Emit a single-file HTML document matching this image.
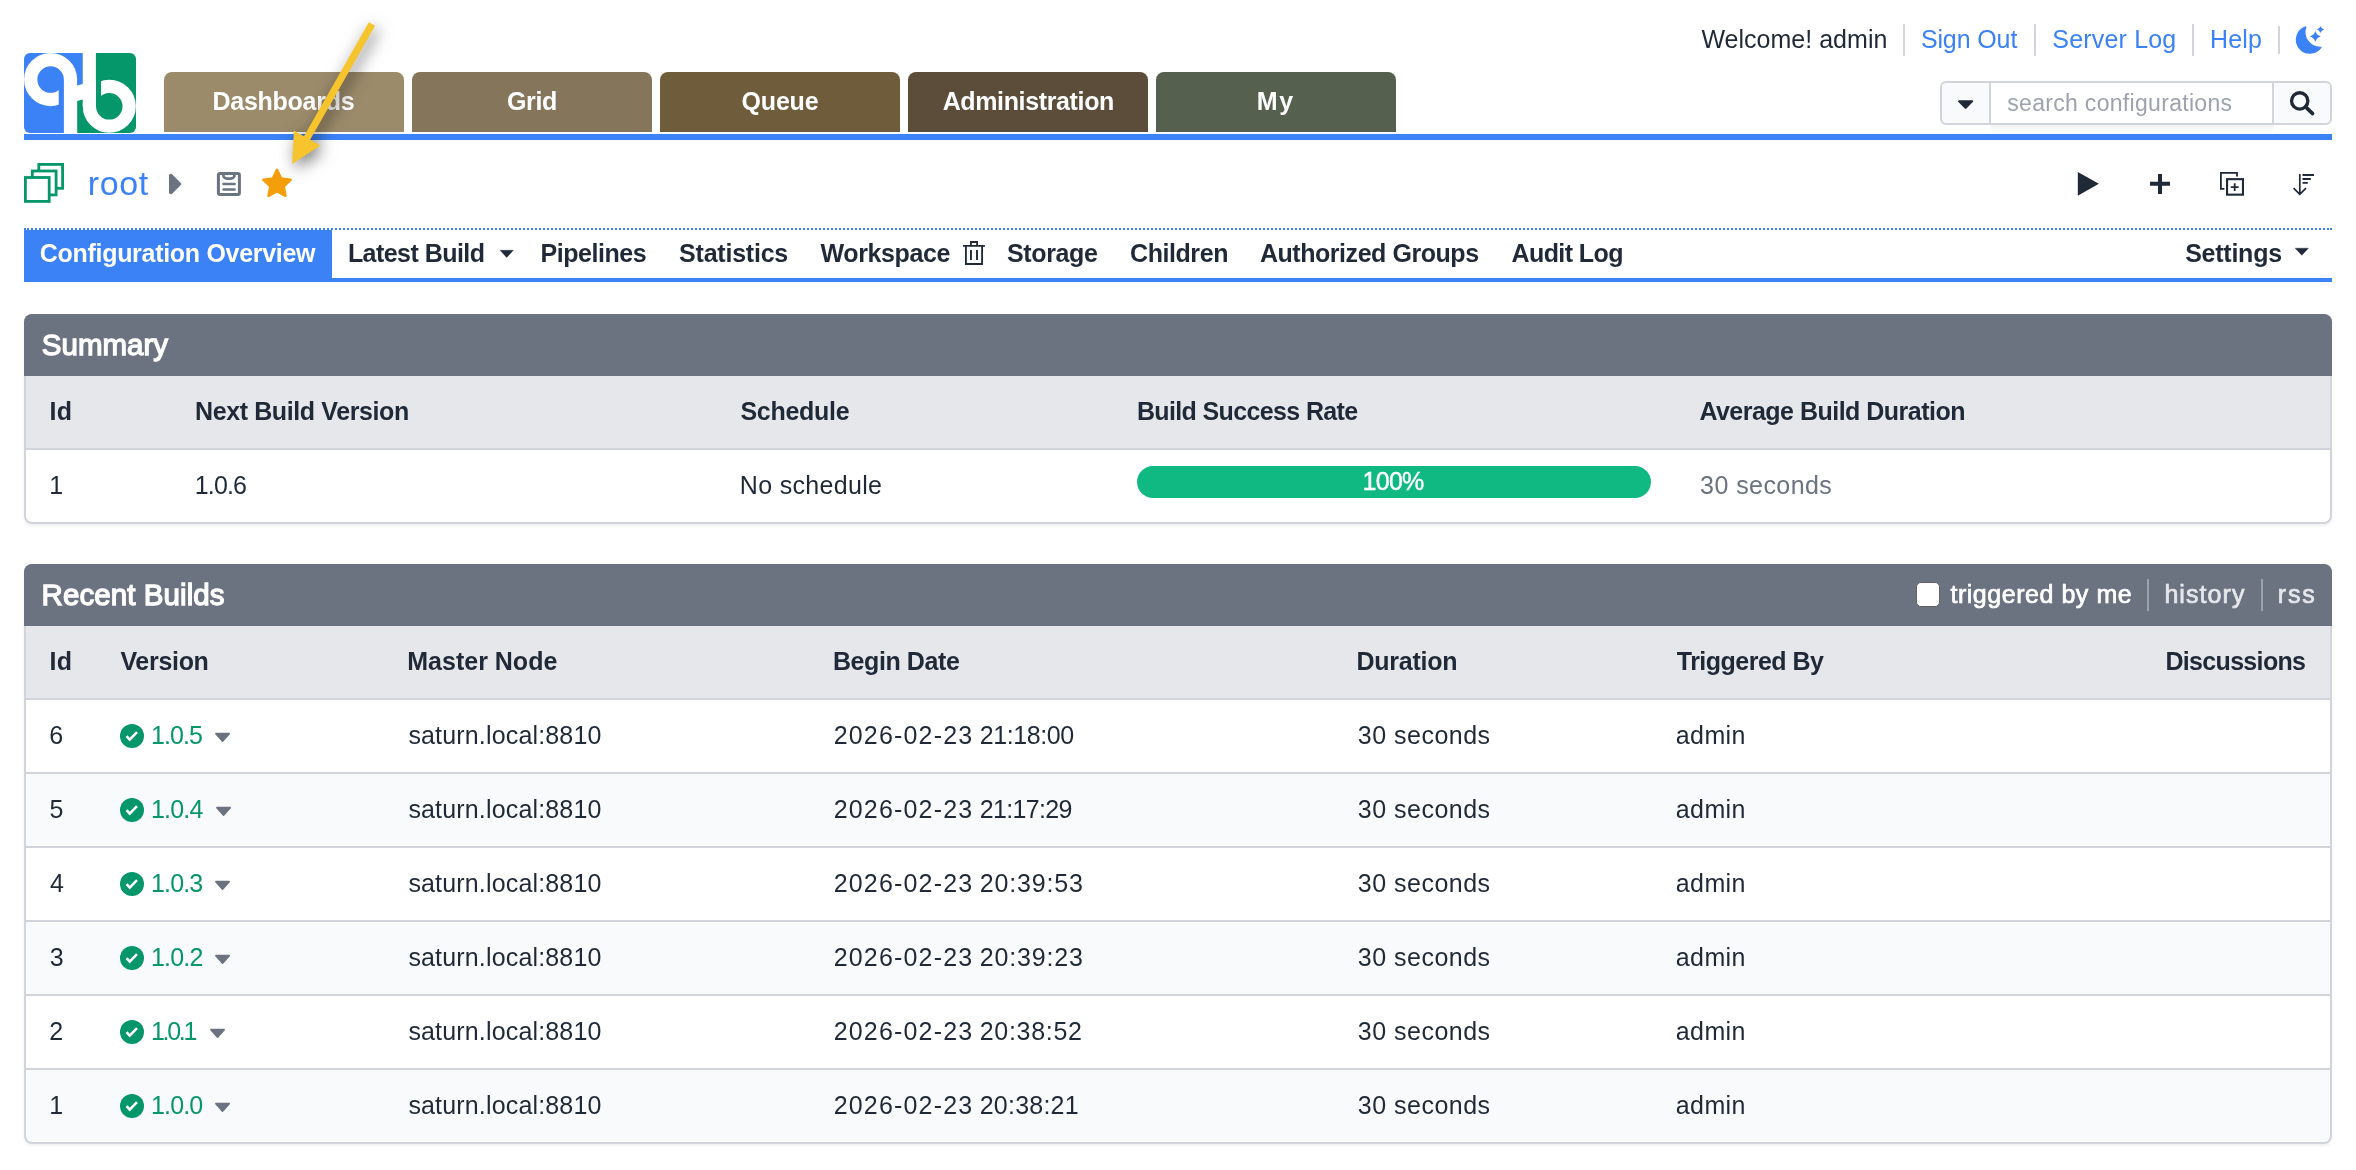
<!DOCTYPE html>
<html><head><meta charset="utf-8"><title>QuickBuild</title>
<style>
html,body{margin:0;padding:0;background:#fff}
body{width:2356px;height:1170px;position:relative;overflow:hidden;font-family:"Liberation Sans",sans-serif}
.t{position:absolute;white-space:pre;display:block}
.r{position:absolute;display:block}
#w{position:absolute;left:0;top:0;width:2356px;height:1170px;will-change:transform}
</style></head><body><div id="w">
<svg class="r" style="left:24px;top:53px" width="112" height="80" viewBox="24 53 112 80">
<defs><clipPath id="lc"><rect x="24" y="53" width="112" height="80" rx="6" ry="6"/></clipPath></defs>
<g clip-path="url(#lc)">
<rect x="77.1" y="53" width="60" height="80" fill="#059669"/>
<path d="M24 53H82.7V84L77.1 85.5V133H24Z" fill="#3b82f6"/>
<path d="M76.5 85.66L83.3 83.84V99.34L76.5 101.16Z" fill="#fff"/>
<circle cx="50.6" cy="79.6" r="19.9" fill="none" stroke="#fff" stroke-width="13.3"/>
<rect x="58.7" y="79.6" width="5.3" height="54" fill="#3b82f6"/>
<rect x="63.9" y="79.6" width="13.2" height="54" fill="#fff"/>
<circle cx="109.3" cy="106.3" r="19.9" fill="none" stroke="#fff" stroke-width="13.3"/>
<rect x="95.8" y="53" width="5.3" height="53.3" fill="#059669"/>
<rect x="82.7" y="53" width="13.2" height="53.3" fill="#fff"/>
</g></svg>
<div class="r" style="left:164px;top:72px;width:240px;height:60px;background:#9b8b6b;border-radius:8px 8px 0 0;"></div>
<span class="t" style="left:212.57px;top:89px;font-size:25px;line-height:25px;color:#fff;font-weight:700;letter-spacing:-0.278px;">Dashboards</span>
<div class="r" style="left:412px;top:72px;width:240px;height:60px;background:#85755a;border-radius:8px 8px 0 0;"></div>
<span class="t" style="left:507.00px;top:89px;font-size:25px;line-height:25px;color:#fff;font-weight:700;letter-spacing:-0.350px;">Grid</span>
<div class="r" style="left:660px;top:72px;width:240px;height:60px;background:#6e5c3b;border-radius:8px 8px 0 0;"></div>
<span class="t" style="left:741.60px;top:89px;font-size:25px;line-height:25px;color:#fff;font-weight:700;letter-spacing:-0.200px;">Queue</span>
<div class="r" style="left:908px;top:72px;width:240px;height:60px;background:#5b4d3a;border-radius:8px 8px 0 0;"></div>
<span class="t" style="left:942.67px;top:89px;font-size:25px;line-height:25px;color:#fff;font-weight:700;letter-spacing:-0.365px;">Administration</span>
<div class="r" style="left:1156px;top:72px;width:240px;height:60px;background:#55604e;border-radius:8px 8px 0 0;"></div>
<span class="t" style="left:1256.78px;top:89px;font-size:25px;line-height:25px;color:#fff;font-weight:700;letter-spacing:1.675px;">My</span>
<div class="r" style="left:24px;top:134px;width:2308px;height:6px;background:#3b82f6;"></div>
<span class="t" style="left:1701.40px;top:27px;font-size:25px;line-height:25px;color:#1f2937;letter-spacing:0.019px;">Welcome! admin</span>
<span class="t" style="left:1920.88px;top:27px;font-size:25px;line-height:25px;color:#3b82f6;letter-spacing:-0.118px;">Sign Out</span>
<span class="t" style="left:2052.28px;top:27px;font-size:25px;line-height:25px;color:#3b82f6;letter-spacing:0.186px;">Server Log</span>
<span class="t" style="left:2209.90px;top:27px;font-size:25px;line-height:25px;color:#3b82f6;letter-spacing:0.208px;">Help</span>
<div class="r" style="left:1903px;top:24px;width:2px;height:32px;background:#d1d5db;"></div>
<div class="r" style="left:2034px;top:24px;width:2px;height:32px;background:#d1d5db;"></div>
<div class="r" style="left:2192px;top:24px;width:2px;height:32px;background:#d1d5db;"></div>
<div class="r" style="left:2278px;top:26px;width:2px;height:28px;background:#d1d5db;"></div>
<svg class="r" style="left:2290px;top:20px" width="40" height="40" viewBox="2290 20 40 40">
<path d="M2305.7 27A13.4 13.4 0 1 0 2320.9 47.4 15.4 15.4 0 0 1 2305.7 27Z" fill="#3b82f6" stroke="#3b82f6" stroke-width="1.4" stroke-linejoin="round"/>
<path d="M2315.3 31.1Q2316.49 35.31 2320.7000000000003 36.5Q2316.49 37.69 2315.3 41.9Q2314.11 37.69 2309.9 36.5Q2314.11 35.31 2315.3 31.1Z" fill="#3b82f6"/>
<path d="M2320.5 25.9Q2321.29 28.71 2324.1 29.5Q2321.29 30.29 2320.5 33.1Q2319.71 30.29 2316.9 29.5Q2319.71 28.71 2320.5 25.9Z" fill="#3b82f6"/>
</svg>
<div class="r" style="left:1990px;top:124px;width:284px;height:7px;background:linear-gradient(rgba(0,0,0,.06),rgba(0,0,0,0))"></div>
<div class="r" style="left:1940px;top:81px;width:392px;height:44px;box-sizing:border-box;border:2px solid #d1d5db;border-radius:6px;background:#f9fafb;overflow:hidden"><div class="r" style="left:47px;top:0;width:285px;height:40px;background:#fff;border-left:2px solid #d1d5db;border-right:2px solid #d1d5db;box-sizing:border-box"></div></div>
<svg class="r" style="left:1957px;top:99px" width="18" height="11" viewBox="0 0 18 11"><path d="M2.2 1.2H15a1.1 1.1 0 0 1 .8 1.9L9.4 9.5a1.1 1.1 0 0 1-1.6 0L1.4 3.1a1.1 1.1 0 0 1 .8-1.9z" fill="#1f2937"/></svg>
<span class="t" style="left:2007.28px;top:92px;font-size:23px;line-height:23px;color:#9ca3af;letter-spacing:0.308px;">search configurations</span>
<svg class="r" style="left:2288px;top:90px" width="28" height="28" viewBox="0 0 28 28"><circle cx="11.7" cy="10.9" r="8.15" fill="none" stroke="#1f2937" stroke-width="3.3"/><path d="M17.6 16.9L24.6 23.6" stroke="#1f2937" stroke-width="3.6" stroke-linecap="round"/></svg>
<svg class="r" style="left:22px;top:161px" width="44" height="44" viewBox="22 161 44 44">
<g fill="#fff" stroke="#059669" stroke-width="2.8">
<rect x="38.8" y="164.4" width="23.8" height="23.9"/>
<rect x="32.3" y="171" width="23.8" height="23.9"/>
<rect x="25.4" y="177.5" width="23.8" height="23.9"/>
</g></svg>
<span class="t" style="left:87.85px;top:166px;font-size:34px;line-height:34px;color:#3b82f6;letter-spacing:0.625px;">root</span>
<svg class="r" style="left:166px;top:171px" width="18" height="26" viewBox="166 171 18 26"><path d="M170.8 175.6v16.8l8.5-8.4z" fill="#6b7280" stroke="#6b7280" stroke-width="3.6" stroke-linejoin="round"/></svg>
<svg class="r" style="left:215px;top:170px" width="28" height="28" viewBox="215 170 28 28">
<rect x="218.4" y="173.4" width="21" height="21.2" rx="1.8" fill="none" stroke="#6b7280" stroke-width="3"/>
<path d="M223.3 174v1a3.6 3.6 0 0 0 3.6 3.6h4a3.6 3.6 0 0 0 3.6-3.6v-1" fill="none" stroke="#6b7280" stroke-width="2.6"/>
<path d="M223.5 184.1h11.1M223.5 189.4h11.1" stroke="#6b7280" stroke-width="2.5" stroke-linecap="round"/>
</svg>
<svg class="r" style="left:258px;top:164px" width="38" height="38" viewBox="258 164 38 38"><path d="M277.00 169.90L281.11 178.54L290.60 179.78L283.66 186.36L285.41 195.77L277.00 191.20L268.59 195.77L270.34 186.36L263.40 179.78L272.89 178.54Z" fill="#f59e0b" stroke="#f59e0b" stroke-width="2.6" stroke-linejoin="round"/></svg>
<svg class="r" style="left:2076px;top:170px" width="26" height="28" viewBox="2076 170 26 28"><path d="M2077.8 171.9v23.8l21.1-11.9z" fill="#1f2937"/></svg>
<svg class="r" style="left:2148px;top:172px" width="24" height="24" viewBox="2148 172 24 24"><path d="M2160 174v20M2150 183.75h20" stroke="#1f2937" stroke-width="4"/></svg>
<svg class="r" style="left:2218px;top:170px" width="28" height="28" viewBox="2218 170 28 28">
<path d="M2224.4 188.8H2220.9V172.8H2237V176.4" fill="none" stroke="#1f2937" stroke-width="1.8"/>
<rect x="2227.05" y="179.15" width="15.9" height="15.5" fill="none" stroke="#1f2937" stroke-width="2.1"/>
<path d="M2234.7 183.2v7.8M2230.8 187.1h7.8" stroke="#1f2937" stroke-width="1.8"/>
</svg>
<svg class="r" style="left:2291px;top:171px" width="26" height="26" viewBox="2291 171 26 26">
<path d="M2299.8 174v20M2293.6 188.2l6.2 6.2 6.2-6.2" fill="none" stroke="#1f2937" stroke-width="1.7"/>
<path d="M2302.5 175h11.5M2302.5 179h8.3M2302.5 182.8h5.3" stroke="#1f2937" stroke-width="1.8"/>
</svg>
<div class="r" style="left:24px;top:228px;width:2308px;height:0;border-top:2px dotted #3b82f6"></div>
<div class="r" style="left:24px;top:230px;width:308px;height:52px;background:#3b82f6;"></div>
<div class="r" style="left:24px;top:278px;width:2308px;height:4px;background:#3b82f6;"></div>
<span class="t" style="left:39.80px;top:241px;font-size:25px;line-height:25px;color:#fff;font-weight:700;letter-spacing:-0.300px;">Configuration Overview</span>
<span class="t" style="left:347.88px;top:241px;font-size:25px;line-height:25px;color:#1f2937;font-weight:700;letter-spacing:-0.541px;">Latest Build</span>
<svg class="r" style="left:499px;top:249px" width="16" height="10" viewBox="499 249 16 10"><path d="M500.1 250.3H513.3L506.7 257.5z" fill="#1f2937" stroke="#1f2937" stroke-width=".4" stroke-linejoin="round"/></svg>
<span class="t" style="left:540.48px;top:241px;font-size:25px;line-height:25px;color:#1f2937;font-weight:700;letter-spacing:-0.444px;">Pipelines</span>
<span class="t" style="left:679.08px;top:241px;font-size:25px;line-height:25px;color:#1f2937;font-weight:700;letter-spacing:-0.225px;">Statistics</span>
<span class="t" style="left:820.60px;top:241px;font-size:25px;line-height:25px;color:#1f2937;font-weight:700;letter-spacing:-0.403px;">Workspace</span>
<svg class="r" style="left:961px;top:239px" width="26" height="28" viewBox="961 239 26 28">
<path d="M963 245.9h21.9M970.9 245.9V242H977.1V245.9" fill="none" stroke="#1f2937" stroke-width="1.85"/>
<path d="M965.9 246V264H982.1V246" fill="none" stroke="#1f2937" stroke-width="1.85"/>
<path d="M970.95 249.9v10M977 249.9v10" stroke="#1f2937" stroke-width="1.9"/>
</svg>
<span class="t" style="left:1006.98px;top:241px;font-size:25px;line-height:25px;color:#1f2937;font-weight:700;letter-spacing:-0.354px;">Storage</span>
<span class="t" style="left:1130.00px;top:241px;font-size:25px;line-height:25px;color:#1f2937;font-weight:700;letter-spacing:-0.425px;">Children</span>
<span class="t" style="left:1259.88px;top:241px;font-size:25px;line-height:25px;color:#1f2937;font-weight:700;letter-spacing:-0.448px;">Authorized Groups</span>
<span class="t" style="left:1511.47px;top:241px;font-size:25px;line-height:25px;color:#1f2937;font-weight:700;letter-spacing:-0.584px;">Audit Log</span>
<span class="t" style="left:2185.18px;top:241px;font-size:25px;line-height:25px;color:#1f2937;font-weight:700;letter-spacing:-0.246px;">Settings</span>
<svg class="r" style="left:2294px;top:247px" width="16" height="10" viewBox="2294 247 16 10"><path d="M2295.2 248.2H2308.4L2301.8 255.3z" fill="#1f2937" stroke="#1f2937" stroke-width=".4" stroke-linejoin="round"/></svg>
<div class="r" style="left:24px;top:314px;width:2308px;height:210px;border-radius:8px;background:#d1d5db;box-shadow:0 2px 3px rgba(0,0,0,.06)"></div>
<div class="r" style="left:24px;top:314px;width:2308px;height:62px;background:#6b7280;border-radius:8px 8px 0 0;"></div>
<div class="r" style="left:26px;top:376px;width:2304px;height:72px;background:#e5e7eb;"></div>
<span class="t" style="left:41.85px;top:330px;font-size:29.5px;line-height:29.5px;color:#fff;-webkit-text-stroke:1.3px #fff;">Summary</span>
<div class="r" style="left:26px;top:450px;width:2304px;height:72px;background:#fff;border-radius:0 0 6px 6px;"></div>
<span class="t" style="left:49.38px;top:399px;font-size:25px;line-height:25px;color:#1f2937;font-weight:700;letter-spacing:0.500px;">Id</span>
<span class="t" style="left:195.07px;top:399px;font-size:25px;line-height:25px;color:#1f2937;font-weight:700;letter-spacing:-0.397px;">Next Build Version</span>
<span class="t" style="left:740.38px;top:399px;font-size:25px;line-height:25px;color:#1f2937;font-weight:700;letter-spacing:-0.279px;">Schedule</span>
<span class="t" style="left:1136.88px;top:399px;font-size:25px;line-height:25px;color:#1f2937;font-weight:700;letter-spacing:-0.631px;">Build Success Rate</span>
<span class="t" style="left:1699.38px;top:399px;font-size:25px;line-height:25px;color:#1f2937;font-weight:700;letter-spacing:-0.517px;">Average Build Duration</span>
<span class="t" style="left:49.33px;top:473px;font-size:25px;line-height:25px;color:#1f2937;">1</span>
<span class="t" style="left:194.82px;top:473px;font-size:25px;line-height:25px;color:#1f2937;letter-spacing:-0.862px;">1.0.6</span>
<span class="t" style="left:739.80px;top:473px;font-size:25px;line-height:25px;color:#1f2937;letter-spacing:0.320px;">No schedule</span>
<div class="r" style="left:1137px;top:466px;width:514px;height:32px;background:#10b981;border-radius:16px;"></div>
<span class="t" style="left:1362.53px;top:469px;font-size:25px;line-height:25px;color:#fff;letter-spacing:-0.717px;-webkit-text-stroke:0.4px #fff;">100%</span>
<span class="t" style="left:1700.12px;top:473px;font-size:25px;line-height:25px;color:#6b7280;letter-spacing:0.431px;">30 seconds</span>
<div class="r" style="left:24px;top:564px;width:2308px;height:580px;border-radius:8px;background:#d1d5db;box-shadow:0 2px 3px rgba(0,0,0,.06)"></div>
<div class="r" style="left:24px;top:564px;width:2308px;height:62px;background:#6b7280;border-radius:8px 8px 0 0;"></div>
<div class="r" style="left:26px;top:626px;width:2304px;height:72px;background:#e5e7eb;"></div>
<span class="t" style="left:41.62px;top:580px;font-size:29.5px;line-height:29.5px;color:#fff;letter-spacing:0.073px;-webkit-text-stroke:1.3px #fff;">Recent Builds</span>
<span class="t" style="left:49.38px;top:649px;font-size:25px;line-height:25px;color:#1f2937;font-weight:700;letter-spacing:0.500px;">Id</span>
<span class="t" style="left:120.38px;top:649px;font-size:25px;line-height:25px;color:#1f2937;font-weight:700;letter-spacing:-0.304px;">Version</span>
<span class="t" style="left:407.27px;top:649px;font-size:25px;line-height:25px;color:#1f2937;font-weight:700;">Master Node</span>
<span class="t" style="left:832.88px;top:649px;font-size:25px;line-height:25px;color:#1f2937;font-weight:700;letter-spacing:-0.403px;">Begin Date</span>
<span class="t" style="left:1356.38px;top:649px;font-size:25px;line-height:25px;color:#1f2937;font-weight:700;letter-spacing:-0.218px;">Duration</span>
<span class="t" style="left:1676.75px;top:649px;font-size:25px;line-height:25px;color:#1f2937;font-weight:700;letter-spacing:-0.509px;">Triggered By</span>
<span class="t" style="left:2165.38px;top:649px;font-size:25px;line-height:25px;color:#1f2937;font-weight:700;letter-spacing:-0.665px;">Discussions</span>
<div class="r" style="left:1915.5px;top:582.4px;width:24.8px;height:24.8px;background:#fff;border-radius:5px;border:1px solid #5f6368;box-sizing:border-box;"></div>
<span class="t" style="left:1950.42px;top:582px;font-size:25px;line-height:25px;color:#fff;letter-spacing:0.539px;-webkit-text-stroke:0.7px #fff;">triggered by me</span>
<div class="r" style="left:2147px;top:579px;width:2px;height:32px;background:#9ca3af;"></div>
<span class="t" style="left:2164.38px;top:582px;font-size:25px;line-height:25px;color:#e5e7eb;letter-spacing:1.067px;-webkit-text-stroke:0.7px #e5e7eb;">history</span>
<div class="r" style="left:2261px;top:579px;width:2px;height:32px;background:#9ca3af;"></div>
<span class="t" style="left:2277.78px;top:582px;font-size:25px;line-height:25px;color:#e5e7eb;letter-spacing:1.812px;-webkit-text-stroke:0.7px #e5e7eb;">rss</span>
<div class="r" style="left:26px;top:700px;width:2304px;height:72px;background:#fff;"></div>
<span class="t" style="left:49.35px;top:723px;font-size:25px;line-height:25px;color:#1f2937;">6</span>
<svg class="r" style="left:120px;top:724px" width="24" height="24" viewBox="0 0 24 24"><circle cx="12" cy="12" r="12" fill="#059669"/><path d="M6.6 12.2l3.1 3.5 7.3-7.6" fill="none" stroke="#fff" stroke-width="2.5" stroke-linejoin="miter"/></svg>
<span class="t" style="left:151.03px;top:723px;font-size:25px;line-height:25px;color:#059669;letter-spacing:-0.938px;">1.0.5</span>
<svg class="r" style="left:213.9px;top:732px" width="18" height="11" viewBox="-1 0 18 11"><path d="M0.9 1.6H14.2L7.55 9.1z" fill="#6b7280" stroke="#6b7280" stroke-width="1.6" stroke-linejoin="round"/></svg>
<span class="t" style="left:408.38px;top:723px;font-size:25px;line-height:25px;color:#1f2937;letter-spacing:0.164px;">saturn.local:8810</span>
<span class="t" style="left:833.65px;top:723px;font-size:25px;line-height:25px;color:#1f2937;letter-spacing:1.186px;">2026-02-23</span>
<span class="t" style="left:979.75px;top:723px;font-size:25px;line-height:25px;color:#1f2937;letter-spacing:-0.418px;">21:18:00</span>
<span class="t" style="left:1357.83px;top:723px;font-size:25px;line-height:25px;color:#1f2937;letter-spacing:0.486px;">30 seconds</span>
<span class="t" style="left:1675.80px;top:723px;font-size:25px;line-height:25px;color:#1f2937;letter-spacing:0.394px;">admin</span>
<div class="r" style="left:26px;top:774px;width:2304px;height:72px;background:#f9fafb;"></div>
<span class="t" style="left:49.60px;top:797px;font-size:25px;line-height:25px;color:#1f2937;">5</span>
<svg class="r" style="left:120px;top:798px" width="24" height="24" viewBox="0 0 24 24"><circle cx="12" cy="12" r="12" fill="#059669"/><path d="M6.6 12.2l3.1 3.5 7.3-7.6" fill="none" stroke="#fff" stroke-width="2.5" stroke-linejoin="miter"/></svg>
<span class="t" style="left:151.03px;top:797px;font-size:25px;line-height:25px;color:#059669;letter-spacing:-0.806px;">1.0.4</span>
<svg class="r" style="left:214.9px;top:806px" width="18" height="11" viewBox="-1 0 18 11"><path d="M0.9 1.6H14.2L7.55 9.1z" fill="#6b7280" stroke="#6b7280" stroke-width="1.6" stroke-linejoin="round"/></svg>
<span class="t" style="left:408.38px;top:797px;font-size:25px;line-height:25px;color:#1f2937;letter-spacing:0.164px;">saturn.local:8810</span>
<span class="t" style="left:833.65px;top:797px;font-size:25px;line-height:25px;color:#1f2937;letter-spacing:1.186px;">2026-02-23</span>
<span class="t" style="left:979.75px;top:797px;font-size:25px;line-height:25px;color:#1f2937;letter-spacing:-0.654px;">21:17:29</span>
<span class="t" style="left:1357.83px;top:797px;font-size:25px;line-height:25px;color:#1f2937;letter-spacing:0.486px;">30 seconds</span>
<span class="t" style="left:1675.80px;top:797px;font-size:25px;line-height:25px;color:#1f2937;letter-spacing:0.394px;">admin</span>
<div class="r" style="left:26px;top:848px;width:2304px;height:72px;background:#fff;"></div>
<span class="t" style="left:50.10px;top:871px;font-size:25px;line-height:25px;color:#1f2937;">4</span>
<svg class="r" style="left:120px;top:872px" width="24" height="24" viewBox="0 0 24 24"><circle cx="12" cy="12" r="12" fill="#059669"/><path d="M6.6 12.2l3.1 3.5 7.3-7.6" fill="none" stroke="#fff" stroke-width="2.5" stroke-linejoin="miter"/></svg>
<span class="t" style="left:151.03px;top:871px;font-size:25px;line-height:25px;color:#059669;letter-spacing:-0.837px;">1.0.3</span>
<svg class="r" style="left:213.9px;top:880px" width="18" height="11" viewBox="-1 0 18 11"><path d="M0.9 1.6H14.2L7.55 9.1z" fill="#6b7280" stroke="#6b7280" stroke-width="1.6" stroke-linejoin="round"/></svg>
<span class="t" style="left:408.38px;top:871px;font-size:25px;line-height:25px;color:#1f2937;letter-spacing:0.164px;">saturn.local:8810</span>
<span class="t" style="left:833.65px;top:871px;font-size:25px;line-height:25px;color:#1f2937;letter-spacing:1.186px;">2026-02-23</span>
<span class="t" style="left:979.75px;top:871px;font-size:25px;line-height:25px;color:#1f2937;letter-spacing:0.829px;">20:39:53</span>
<span class="t" style="left:1357.83px;top:871px;font-size:25px;line-height:25px;color:#1f2937;letter-spacing:0.486px;">30 seconds</span>
<span class="t" style="left:1675.80px;top:871px;font-size:25px;line-height:25px;color:#1f2937;letter-spacing:0.394px;">admin</span>
<div class="r" style="left:26px;top:922px;width:2304px;height:72px;background:#f9fafb;"></div>
<span class="t" style="left:49.73px;top:945px;font-size:25px;line-height:25px;color:#1f2937;">3</span>
<svg class="r" style="left:120px;top:946px" width="24" height="24" viewBox="0 0 24 24"><circle cx="12" cy="12" r="12" fill="#059669"/><path d="M6.6 12.2l3.1 3.5 7.3-7.6" fill="none" stroke="#fff" stroke-width="2.5" stroke-linejoin="miter"/></svg>
<span class="t" style="left:151.03px;top:945px;font-size:25px;line-height:25px;color:#059669;letter-spacing:-0.806px;">1.0.2</span>
<svg class="r" style="left:213.9px;top:954px" width="18" height="11" viewBox="-1 0 18 11"><path d="M0.9 1.6H14.2L7.55 9.1z" fill="#6b7280" stroke="#6b7280" stroke-width="1.6" stroke-linejoin="round"/></svg>
<span class="t" style="left:408.38px;top:945px;font-size:25px;line-height:25px;color:#1f2937;letter-spacing:0.164px;">saturn.local:8810</span>
<span class="t" style="left:833.65px;top:945px;font-size:25px;line-height:25px;color:#1f2937;letter-spacing:1.186px;">2026-02-23</span>
<span class="t" style="left:979.75px;top:945px;font-size:25px;line-height:25px;color:#1f2937;letter-spacing:0.829px;">20:39:23</span>
<span class="t" style="left:1357.83px;top:945px;font-size:25px;line-height:25px;color:#1f2937;letter-spacing:0.486px;">30 seconds</span>
<span class="t" style="left:1675.80px;top:945px;font-size:25px;line-height:25px;color:#1f2937;letter-spacing:0.394px;">admin</span>
<div class="r" style="left:26px;top:996px;width:2304px;height:72px;background:#fff;"></div>
<span class="t" style="left:49.35px;top:1019px;font-size:25px;line-height:25px;color:#1f2937;">2</span>
<svg class="r" style="left:120px;top:1020px" width="24" height="24" viewBox="0 0 24 24"><circle cx="12" cy="12" r="12" fill="#059669"/><path d="M6.6 12.2l3.1 3.5 7.3-7.6" fill="none" stroke="#fff" stroke-width="2.5" stroke-linejoin="miter"/></svg>
<span class="t" style="left:151.03px;top:1019px;font-size:25px;line-height:25px;color:#059669;letter-spacing:-2.300px;">1.0.1</span>
<svg class="r" style="left:208.9px;top:1028px" width="18" height="11" viewBox="-1 0 18 11"><path d="M0.9 1.6H14.2L7.55 9.1z" fill="#6b7280" stroke="#6b7280" stroke-width="1.6" stroke-linejoin="round"/></svg>
<span class="t" style="left:408.38px;top:1019px;font-size:25px;line-height:25px;color:#1f2937;letter-spacing:0.164px;">saturn.local:8810</span>
<span class="t" style="left:833.65px;top:1019px;font-size:25px;line-height:25px;color:#1f2937;letter-spacing:1.186px;">2026-02-23</span>
<span class="t" style="left:979.75px;top:1019px;font-size:25px;line-height:25px;color:#1f2937;letter-spacing:0.689px;">20:38:52</span>
<span class="t" style="left:1357.83px;top:1019px;font-size:25px;line-height:25px;color:#1f2937;letter-spacing:0.486px;">30 seconds</span>
<span class="t" style="left:1675.80px;top:1019px;font-size:25px;line-height:25px;color:#1f2937;letter-spacing:0.394px;">admin</span>
<div class="r" style="left:26px;top:1070px;width:2304px;height:72px;background:#f9fafb;border-radius:0 0 6px 6px;"></div>
<span class="t" style="left:49.33px;top:1093px;font-size:25px;line-height:25px;color:#1f2937;">1</span>
<svg class="r" style="left:120px;top:1094px" width="24" height="24" viewBox="0 0 24 24"><circle cx="12" cy="12" r="12" fill="#059669"/><path d="M6.6 12.2l3.1 3.5 7.3-7.6" fill="none" stroke="#fff" stroke-width="2.5" stroke-linejoin="miter"/></svg>
<span class="t" style="left:151.03px;top:1093px;font-size:25px;line-height:25px;color:#059669;letter-spacing:-0.869px;">1.0.0</span>
<svg class="r" style="left:213.9px;top:1102px" width="18" height="11" viewBox="-1 0 18 11"><path d="M0.9 1.6H14.2L7.55 9.1z" fill="#6b7280" stroke="#6b7280" stroke-width="1.6" stroke-linejoin="round"/></svg>
<span class="t" style="left:408.38px;top:1093px;font-size:25px;line-height:25px;color:#1f2937;letter-spacing:0.164px;">saturn.local:8810</span>
<span class="t" style="left:833.65px;top:1093px;font-size:25px;line-height:25px;color:#1f2937;letter-spacing:1.186px;">2026-02-23</span>
<span class="t" style="left:979.75px;top:1093px;font-size:25px;line-height:25px;color:#1f2937;letter-spacing:0.218px;">20:38:21</span>
<span class="t" style="left:1357.83px;top:1093px;font-size:25px;line-height:25px;color:#1f2937;letter-spacing:0.486px;">30 seconds</span>
<span class="t" style="left:1675.80px;top:1093px;font-size:25px;line-height:25px;color:#1f2937;letter-spacing:0.394px;">admin</span>
<svg class="r" style="left:240px;top:0;filter:drop-shadow(3px 5px 8px rgba(0,0,0,.55))" width="200" height="220" viewBox="240 0 200 220"><path d="M368.9 22.2L304.0 136.2L293.9 130.4L292.2 164.0L320.3 145.5L310.1 139.7L375.1 25.8Z" fill="#f6c42d"/></svg>
</div></body></html>
